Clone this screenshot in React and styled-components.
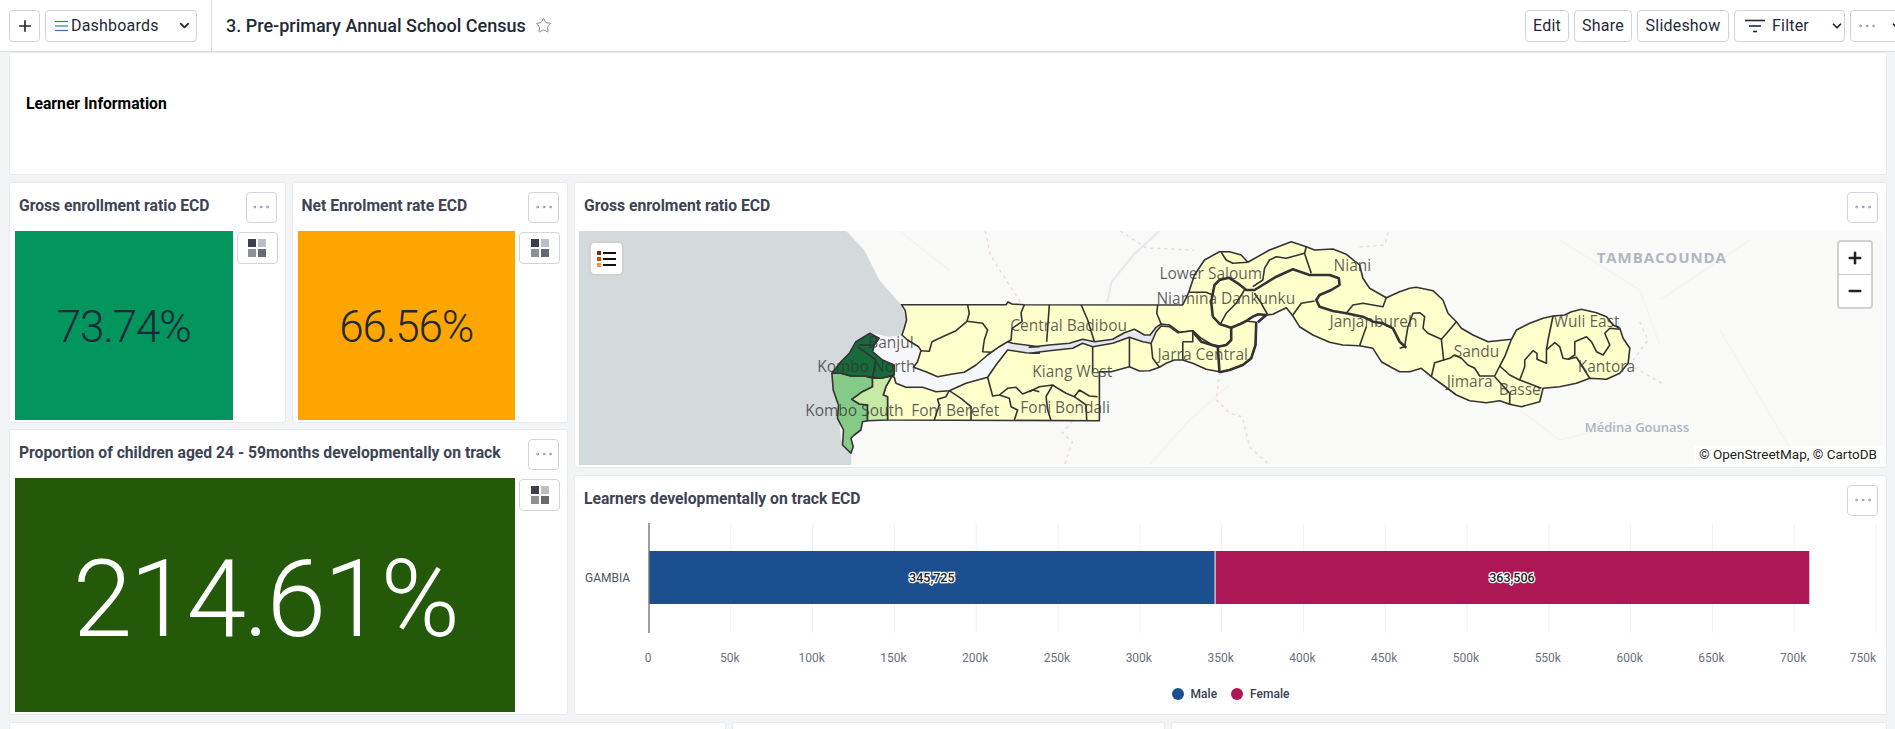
import React from 'react'
import styled, { createGlobalStyle } from 'styled-components'
import { Plus, ChevronDown, Star, Ellipsis, Minus } from 'lucide-react'

const GlobalStyle = createGlobalStyle`
  html, body { margin: 0; padding: 0; height: 100%; overflow: hidden; }
  body { background: #f3f4f6; font-family: Roboto, "Liberation Sans", sans-serif; color: #1f2937; }
`

const Header = styled.header`
  display: flex;
  align-items: center;
  height: 51px;
  background: #fff;
  border-bottom: 1px solid #d9dee5;
  overflow: hidden;
`
const LeftTools = styled.div`
  display: flex;
  align-items: center;
  gap: 5px;
  height: 100%;
  padding: 0 14px 0 9px;
  border-right: 1px solid #d9dee5;
`
const ToolButton = styled.button`
  display: flex;
  align-items: center;
  justify-content: ${p => (p.$pl ? 'flex-start' : 'center')};
  gap: ${p => p.$gap || 0}px;
  box-sizing: border-box;
  height: 32px;
  width: ${p => p.$w}px;
  padding: 0 0 0 ${p => p.$pl || 0}px;
  background: #fff;
  border: 1px solid #d1d5db;
  border-radius: 4px;
  color: #1f2937;
  font: 400 16px Roboto, sans-serif;
  letter-spacing: .2px;
  flex-shrink: 0;
`
const BurgerIcon = styled.svg`
  width: 13px;
  height: 12px;
`
const PageTitle = styled.h1`
  flex: 1;
  display: flex;
  align-items: center;
  gap: 9px;
  margin: 0 0 0 14px;
  font: 500 18px Roboto, sans-serif;
  color: #1f2937;
`
const Actions = styled.div`
  display: flex;
  align-items: center;
  gap: 5px;
  margin-right: -16px;
  flex-shrink: 0;
`

const Main = styled.main`
  display: flex;
  flex-direction: column;
  gap: 7px;
  height: 677px;
  padding: 0 8px 0 9px;
  overflow: hidden;
`
const Card = styled.section`
  position: relative;
  box-sizing: border-box;
  display: flex;
  flex-direction: column;
  height: ${p => p.$h}px;
  background: #fff;
  border: 1px solid #e8eaee;
  border-radius: 3px;
  flex: ${p => p.$grow || 'none'};
  min-width: 0;
`
const BannerText = styled.div`
  display: flex;
  align-items: center;
  height: 100%;
  padding: 0 0 20px 16px;
  box-sizing: border-box;
  font: 700 15.7px Roboto, sans-serif;
  color: #000;
`
const DashRow = styled.div`
  display: flex;
  gap: 6px;
`
const Column = styled.div`
  display: flex;
  flex-direction: column;
  gap: ${p => p.$gap}px;
  width: ${p => (p.$w ? p.$w + 'px' : 'auto')};
  flex: ${p => (p.$w ? 'none' : 1)};
  min-width: 0;
`
const Pair = styled.div`
  display: flex;
  gap: 6px;
`
const CardHead = styled.div`
  display: flex;
  align-items: center;
  justify-content: space-between;
  box-sizing: border-box;
  height: 48px;
  padding: 0 8px 0 9px;
  flex-shrink: 0;
`
const CardTitle = styled.h2`
  margin: -3px 0 0;
  font: 700 15.7px Roboto, sans-serif;
  color: #3c4454;
  white-space: nowrap;
`
const MenuButton = styled.button`
  display: flex;
  align-items: center;
  justify-content: center;
  box-sizing: border-box;
  width: 31px;
  height: 31px;
  padding: 0;
  background: #fff;
  border: 1px solid #d1d5db;
  border-radius: 4px;
  color: #6b7280;
`
const TileRow = styled.div`
  display: flex;
  flex: 1;
  gap: 4px;
  padding: 0 7px 2px 5px;
  min-height: 0;
`
const Tile = styled.div`
  flex: 1;
  display: flex;
  align-items: center;
  justify-content: center;
  box-sizing: border-box;
  padding-top: .08em;
  background: ${p => p.$bg};
  color: ${p => p.$fg};
  font: 300 ${p => p.$size}px Roboto, sans-serif;
  letter-spacing: -.025em;
`
const GridToggle = styled.button`
  display: grid;
  grid-template-columns: 8px 8px;
  grid-auto-rows: 8px;
  gap: 2px;
  align-content: center;
  justify-content: center;
  box-sizing: border-box;
  width: 41px;
  height: 32px;
  margin-top: 1px;
  padding: 0;
  background: #fff;
  border: 1px solid #d1d5db;
  border-radius: 4px;
`
const Square = styled.i`
  display: block;
  background: ${p => p.$c};
`
const MapBox = styled.div`
  position: relative;
  flex: 1;
  margin: 0 3px 2px 4px;
  background: #f9f9f8;
  overflow: hidden;
`
const MapSvg = styled.svg`
  display: block;
  width: 100%;
  height: 100%;
`
const LegendToggle = styled.div`
  position: absolute;
  top: 10px;
  left: 10px;
  box-sizing: border-box;
  width: 35px;
  height: 35px;
  display: flex;
  align-items: center;
  justify-content: center;
  background: #fff;
  border: 2px solid rgba(0, 0, 0, .18);
  border-radius: 6px;
`
const ZoomControl = styled.div`
  position: absolute;
  top: 9px;
  right: 10px;
  box-sizing: border-box;
  width: 36px;
  height: 69px;
  display: flex;
  flex-direction: column;
  background: #fff;
  border: 2px solid rgba(0, 0, 0, .18);
  border-radius: 4px;
`
const ZoomStep = styled.div`
  flex: 1;
  display: flex;
  align-items: center;
  justify-content: center;
  color: #222;
  & + & { border-top: 1px solid #ccc; }
`
const Attribution = styled.div`
  position: absolute;
  right: 0;
  bottom: 0;
  padding: 0 6px 3px 5px;
  background: rgba(255, 255, 255, .75);
  font: 400 13.5px Roboto, sans-serif;
  color: #222;
`
const ChartSvg = styled.svg`
  display: block;
  width: 100%;
  height: 152px;
  margin-top: -1px;
  flex-shrink: 0;
`
const Legend = styled.div`
  display: flex;
  justify-content: center;
  gap: 14px;
  margin-top: 12px;
  font: 500 12px Roboto, sans-serif;
  color: #374151;
`
const LegendItem = styled.span`
  display: flex;
  align-items: center;
  gap: 7px;
  &::before {
    content: '';
    width: 12px;
    height: 12px;
    border-radius: 50%;
    background: ${p => p.$c};
  }
`
const BottomRow = styled.div`
  display: flex;
  gap: 6px;
`

// map traced from crops of the reference: each crop has its own origin, at 3x
const W = [780, 290]
const C = [1030, 290]
const M = [1130, 235]
const E = [1400, 270]

const z = ([ox, oy], pts) =>
  pts.trim().split(/\s+/).map(p => {
    const [x, y] = p.split(',').map(Number)
    return `${(ox + x / 3).toFixed(1)},${(oy + y / 3).toFixed(1)}`
  })
const join = (...parts) => parts.flat().join(' ')

const northBank = join(
  z(W, '367,44 680,44 686,36 698,42 735,44'),
  z(M, '160,210 178,172 195,120 225,75 270,50 300,50 335,60 355,82 420,45 485,20 530,35 555,45 610,42 650,58 690,90 700,130 720,160 770,188 810,170 840,160'),
  z(E, '50,52 100,62 130,90 145,130 170,155 185,175 220,195 265,215 335,208 350,180 390,160 430,145 460,138 495,135 515,125 545,118 590,128 620,140 640,165 660,175 670,205 690,235 685,280 660,310 620,328 570,325 530,340 480,350 430,355 420,395 365,410 330,403 300,392 260,398 210,392 170,375 130,345 95,320 65,295 30,305 0,305'),
  z(M, '790,400 755,380 730,340 690,332 640,330 600,322 550,300 510,275 488,240 470,218 430,238 410,240 385,238 370,245 350,258 330,268 305,278 305,315 290,330 265,335 215,320 190,290'),
  z(C, '490,122 450,127 420,105 395,102 380,112 362,135 345,135 315,118 285,128 250,148 195,155 160,148 120,160 60,165 0,172'),
  z(W, '780,170 700,160 685,155 660,170 625,195 590,225 555,247 520,252 475,260 440,245 403,232 415,215 425,182 418,170 385,150 368,135 375,115 382,90 378,62')
)
const southBank = join(
  z(W, '338,258 345,262 350,280 380,292 430,292 470,305 510,302 560,280 625,262 650,225 685,180 740,188 780,190'),
  z(C, '0,190 60,182 130,175 160,160 190,170 250,160 300,142 340,155 365,160 380,125 395,108 420,110 445,128 490,122 515,145 545,163 570,168 570,245 530,238 490,220 460,210 435,210 410,220 390,232 360,242 330,243 300,230 245,245 210,245 210,392'),
  z(W, '325,390 325,320 312,315 320,290')
)
const jarraEast = join(z(M, '305,278 305,315 290,330 265,335 270,412 300,405 340,390 365,370 378,330 380,262 350,258 330,268'))

const banjulLand = join(z(W, '285,165 300,145 368,135 385,150 418,170 425,182 415,215 403,232 345,225 310,210 280,185'))
const estuary = join(z(W, '345,225 403,232 440,245 475,260 520,252 555,247 590,225 625,195 660,170 685,155 685,180 650,225 625,262 560,280 510,302 470,305 430,292 380,292 350,280 345,262'))
const river = join(
  z(W, '685,168 740,178 780,180'),
  z(C, '0,181 60,173 130,167 160,154 195,162 250,154 300,132 340,145 365,148 385,115')
)

const borders = [
  z(W, '565,44 570,70 563,94 530,122 490,140 458,155 450,184 425,182'),
  z(W, '563,94 610,100 625,120 615,150 610,185 637,187'),
  z(W, '735,44 725,68 728,95 698,115 695,150 685,155'),
  z(C, '60,44 52,155'),
  z(C, '155,44 175,90 195,155'),
  z(C, '385,44 382,70 395,102'),
  z(W, '510,302 500,320 475,328 480,345 465,390'),
  z(W, '510,302 545,325 575,350 575,390'),
  z(W, '625,262 640,318 660,315 685,295 710,292 730,312 760,300 780,305'),
  z(C, '0,305 30,290 70,285 85,295 110,310 135,320 150,300 180,318 205,320'),
  z(W, '660,315 690,325 695,350 715,360 705,390'),
  z(C, '70,285 50,320 55,360 65,392'),
  z(C, '135,320 170,345 172,392'),
  z(C, '190,170 190,245'),
  z(C, '300,142 300,230'),
  z(C, '365,160 370,205 390,232'),
  z(C, '460,155 490,155 490,122'),
  z(C, '460,155 460,210'),
  z(M, '178,172 230,172 250,180'),
  z(M, '275,52 290,75 310,85 355,82'),
  z(M, '370,155 400,135 405,100 420,75 440,65 470,70 525,55 545,115'),
  z(M, '525,55 530,35'),
  z(M, '345,165 320,205 290,235 272,268'),
  z(M, '375,175 395,205 415,240'),
  z(M, '490,240 515,205 555,198'),
  z(M, '650,235 670,210 700,205 760,215 770,188'),
  z(M, '710,275 690,332'),
  z(E, '170,155 145,185 125,208 85,190 70,175 75,140 60,128 40,130 25,170 15,230 0,235'),
  z(E, '125,208 132,270 105,278 95,320'),
  z(E, '132,270 150,265 165,255 185,265 205,285 225,295 240,318 285,318 300,288 315,260 335,208'),
  z(E, '300,288 330,315 360,330 425,355'),
  z(E, '285,320 330,370 330,403'),
  z(E, '360,330 375,290 375,270 400,242 412,250 412,268 440,280 440,240 465,218 480,230 490,265 505,268 525,255 525,215 560,200 575,215 590,245 610,255 630,225 615,190 630,175 660,178'),
  z(E, '505,268 530,262 570,325'),
  z(E, '440,240 445,210 460,138'),
]
const thickBorders = [
  z(M, '250,245 245,200 255,150 270,135 298,128 325,145 350,165 375,165 440,125 490,103 540,120 600,120 628,130 630,150 605,165 570,180 560,195 570,215 610,228 650,235 700,245 730,260 760,265 790,280 810,320 830,338'),
  z(M, '250,245 272,268 305,278'),
  z(M, '380,262 378,330 365,370 340,390 300,405 270,412'),
  z(M, '265,335 270,412'),
  z(M, '305,278 305,315 290,330 265,335'),
  z(M, '305,278 330,268 350,258 370,245 385,238 410,240 385,262'),
  z(M, '190,290 215,320 265,335'),
]
const greens = [
  { fill: '#85cb87', pts: '158,250 185,250 215,258 255,258 280,265 280,290 250,305 218,328 240,342 265,345 265,392 250,395 245,420 225,435 215,445 222,470 215,490 190,465 193,420 175,385 178,345 162,300' },
  { fill: '#c7e9a6', pts: '280,265 305,265 338,258 320,290 312,315 325,320 325,390 265,392 265,345 240,342 218,328 250,305 280,290' },
  { fill: '#176b3a', pts: '272,130 300,145 285,165 280,185 310,210 345,225 345,255 305,265 255,258 215,258 185,250 158,250 185,215 210,190 230,155' },
]
const greenLines = ['235,170 290,210', '290,210 280,262', '285,165 240,165']

const seaShape = '580,231 847,231 865,250 880,280 902,305 907,320 905,340 872,333 855,345 833,373 838,400 842,440 852,453 852,465 580,465'

const pinkRoutes = [
  '986,231 991,255 1008,282 1021,302',
  '1121,231 1147,248 1194,250',
  '1360,247 1385,245 1389,231',
  '1073,421 1063,433 1073,442 1065,465',
  '1220,372 1217,400 1230,413 1243,417 1250,447 1270,465',
  '1640,322 1648,340 1630,365 1665,385',
]
const greyRoutes = [
  '1160,231 1134,255 1112,282 1108,302',
]
const faintRoads = [
  '900,231 950,270',
  '1560,240 1640,290 1660,345',
  '1150,465 1190,420 1230,385',
  '1640,420 1560,440 1520,410',
  '1750,240 1660,300',
  '1720,330 1800,465',
]

const labels = [
  ['Banjul', 869, 348],
  ['Kombo North', 818, 372],
  ['Kombo South', 806, 416],
  ['Foni Berefet', 912, 416],
  ['Kiang West', 1033, 377],
  ['Foni Bondali', 1021, 413],
  ['Central Badibou', 1011, 331],
  ['Jarra Central', 1158, 360],
  ['Niamina Dankunku', 1157, 304],
  ['Lower Saloum', 1160, 279],
  ['Niani', 1334, 271],
  ['Janjanbureh', 1330, 327],
  ['Sandu', 1454, 357],
  ['Jimara', 1447, 387],
  ['Basse', 1499, 395],
  ['Wuli East', 1554, 327],
  ['Kantora', 1578, 372],
]

const GambiaMap = () => (
  <MapSvg viewBox="580 231 1303 234" preserveAspectRatio="none">
    <polygon points={seaShape} fill="#d4d9dc" />
    {faintRoads.map(r => <polyline key={r} points={r} fill="none" stroke="#f3f3f2" strokeWidth="1.3" />)}
    {greyRoutes.map(r => <polyline key={r} points={r} fill="none" stroke="#e6eaed" strokeWidth="2.2" />)}
    {pinkRoutes.map(r => <polyline key={r} points={r} fill="none" stroke="#f0d6db" strokeWidth="1.4" strokeDasharray="3 4" />)}
    <polygon points={banjulLand} fill="#f6f6f9" />
    <polygon points={estuary} fill="#f6f7f9" />
    <polyline points={river} fill="none" stroke="#e4e7ed" strokeWidth="6" />
    <text x="1597" y="263" fill="#aeb7c2" fontFamily="Open Sans" fontWeight="700" fontSize="15" letterSpacing=".9">TAMBACOUNDA</text>
    <text x="1585" y="432" fill="#aab5c2" fontFamily="Open Sans" fontWeight="600" fontSize="13">Médina Gounass</text>

    <g stroke="#333" strokeWidth="1.6" strokeLinejoin="round" fill="#ffffcc">
      <polygon points={northBank} />
      <polygon points={southBank} />
      <polygon points={jarraEast} />
      {greens.map(g => <polygon key={g.pts} points={join(z(W, g.pts))} fill={g.fill} />)}
    </g>
    <g stroke="#333" strokeWidth="1.6" strokeLinejoin="round" fill="none">
      {borders.map((b, i) => <polyline key={i} points={join(b)} />)}
      {greenLines.map(l => <polyline key={l} points={join(z(W, l))} />)}
    </g>
    <g stroke="#333" strokeWidth="2.6" strokeLinejoin="round" fill="none">
      {thickBorders.map((b, i) => <polyline key={i} points={join(b)} />)}
    </g>
    <g fill="#333" fillOpacity=".78" fontFamily="Open Sans" fontSize="15.5">
      {labels.map(([t, x, y]) => <text key={t} x={x} y={y}>{t}</text>)}
    </g>
  </MapSvg>
)

const ticks = ['0', '50k', '100k', '150k', '200k', '250k', '300k', '350k', '400k', '450k', '500k', '550k', '600k', '650k', '700k', '750k']
const X0 = 74
const STEP = 81.8
const maleWidth = (345725 / 50000) * STEP
const femaleWidth = (363506 / 50000) * STEP

const BarChart = () => (
  <ChartSvg viewBox="0 0 1311 152" preserveAspectRatio="xMinYMin meet">
    {ticks.slice(1).map((t, i) => (
      <line key={t} x1={X0 + STEP * (i + 1)} x2={X0 + STEP * (i + 1)} y1="0" y2="110" stroke="#f0f1f3" strokeWidth="1" />
    ))}
    <rect x={X0} y="28" width={maleWidth} height="53" fill="#1b4f8f" />
    <rect x={X0 + maleWidth + 1} y="28" width={femaleWidth - 1} height="53" fill="#ad1755" />
    <line x1={X0} x2={X0} y1="0" y2="110" stroke="#777" strokeWidth="1.4" />
    <g fontFamily="Roboto" fontSize="12">
      <text x="10" y="59" fill="#4b5563">GAMBIA</text>
      {ticks.map((t, i) => (
        <text
          key={t}
          x={i === 15 ? 1301 : X0 - 1 + STEP * i}
          y="139"
          textAnchor={i === 15 ? 'end' : 'middle'}
          fill="#6b7280"
        >
          {t}
        </text>
      ))}
      <g fill="#222" stroke="#fff" strokeWidth="2.5" paintOrder="stroke" fontWeight="500" fontSize="12.5" textAnchor="middle">
        <text x={X0 + maleWidth / 2} y="59">345,725</text>
        <text x={X0 + maleWidth + femaleWidth / 2} y="59">363,506</text>
      </g>
    </g>
  </ChartSvg>
)

const DotsMenu = () => (
  <MenuButton><Ellipsis size={22} strokeWidth={0.7} /></MenuButton>
)
const TileToggle = () => (
  <GridToggle>
    <Square $c="#3b3f4d" /><Square $c="#bcbec3" /><Square $c="#8e9096" /><Square $c="#646972" />
  </GridToggle>
)

export default function App() {
  return (
    <>
      <GlobalStyle />
      <Header>
        <LeftTools>
          <ToolButton $w={31}><Plus size={18} strokeWidth={2.2} /></ToolButton>
          <ToolButton $w={152} $pl={9} $gap={3}>
            <BurgerIcon viewBox="0 0 13 12" stroke="#3b6fc4" strokeWidth="1.2">
              <line x1="0" x2="13" y1="1.5" y2="1.5" />
              <line x1="0" x2="13" y1="6" y2="6" />
              <line x1="0" x2="13" y1="10.5" y2="10.5" />
            </BurgerIcon>
            Dashboards
            <ChevronDown size={15} strokeWidth={3} style={{ marginLeft: 15 }} />
          </ToolButton>
        </LeftTools>
        <PageTitle>
          3. Pre-primary Annual School Census
          <Star size={17} strokeWidth={1.2} color="#6b7280" />
        </PageTitle>
        <Actions>
          <ToolButton $w={44}>Edit</ToolButton>
          <ToolButton $w={58}>Share</ToolButton>
          <ToolButton $w={92}>Slideshow</ToolButton>
          <ToolButton $w={111} $pl={10} $gap={7}>
            <svg width="20" height="14" viewBox="0 0 20 14" stroke="#1f2937" strokeWidth="1.6">
              <line x1="0" x2="20" y1="1.5" y2="1.5" />
              <line x1="4" x2="16" y1="7" y2="7" />
              <line x1="8" x2="12" y1="12.5" y2="12.5" />
            </svg>
            Filter
            <ChevronDown size={14} strokeWidth={3} style={{ marginLeft: 14 }} />
          </ToolButton>
          <ToolButton $w={61} $pl={5} $gap={12}>
            <Ellipsis size={22} strokeWidth={0.7} color="#6b7280" />
            <ChevronDown size={14} strokeWidth={3} />
          </ToolButton>
        </Actions>
      </Header>
      <Main>
        <Card $h={123}>
          <BannerText>Learner Information</BannerText>
        </Card>
        <DashRow>
          <Column $w={559} $gap={6}>
            <Pair>
              <Card $h={241} $grow={1}>
                <CardHead><CardTitle>Gross enrollment ratio ECD</CardTitle><DotsMenu /></CardHead>
                <TileRow>
                  <Tile $bg="#03955e" $fg="#1f2937" $size={44}>73.74%</Tile>
                  <TileToggle />
                </TileRow>
              </Card>
              <Card $h={241} $grow={1}>
                <CardHead><CardTitle>Net Enrolment rate ECD</CardTitle><DotsMenu /></CardHead>
                <TileRow>
                  <Tile $bg="#ffa500" $fg="#1f2937" $size={44}>66.56%</Tile>
                  <TileToggle />
                </TileRow>
              </Card>
            </Pair>
            <Card $h={286}>
              <CardHead><CardTitle>Proportion of children aged 24 - 59months developmentally on track</CardTitle><DotsMenu /></CardHead>
              <TileRow>
                <Tile $bg="#24590a" $fg="#fff" $size={107.5}>214.61%</Tile>
                <TileToggle />
              </TileRow>
            </Card>
          </Column>
          <Column $gap={7}>
            <Card $h={286}>
              <CardHead><CardTitle>Gross enrolment ratio ECD</CardTitle><DotsMenu /></CardHead>
              <MapBox>
                <GambiaMap />
                <LegendToggle>
                  <svg width="20" height="18" viewBox="0 0 20 18">
                    <rect x="0" y="1" width="4" height="4" fill="#7f2704" />
                    <rect x="0" y="7" width="4" height="4" fill="#d94801" />
                    <rect x="0" y="13" width="4" height="4" fill="#fd8d3c" />
                    <rect x="6" y="2" width="13" height="2" fill="#111" />
                    <rect x="6" y="8" width="13" height="2" fill="#111" />
                    <rect x="6" y="14" width="13" height="2" fill="#111" />
                  </svg>
                </LegendToggle>
                <ZoomControl>
                  <ZoomStep><Plus size={18} strokeWidth={3.4} /></ZoomStep>
                  <ZoomStep><Minus size={18} strokeWidth={3.4} /></ZoomStep>
                </ZoomControl>
                <Attribution>© OpenStreetMap, © CartoDB</Attribution>
              </MapBox>
            </Card>
            <Card $h={240}>
              <CardHead><CardTitle>Learners developmentally on track ECD</CardTitle><DotsMenu /></CardHead>
              <BarChart />
              <Legend>
                <LegendItem $c="#1b4f8f">Male</LegendItem>
                <LegendItem $c="#ad1755">Female</LegendItem>
              </Legend>
            </Card>
          </Column>
        </DashRow>
        <BottomRow>
          <Card $h={20} $grow="0 0 717px" />
          <Card $h={20} $grow="0 0 433px" />
          <Card $h={20} $grow={1} />
        </BottomRow>
      </Main>
    </>
  )
}
